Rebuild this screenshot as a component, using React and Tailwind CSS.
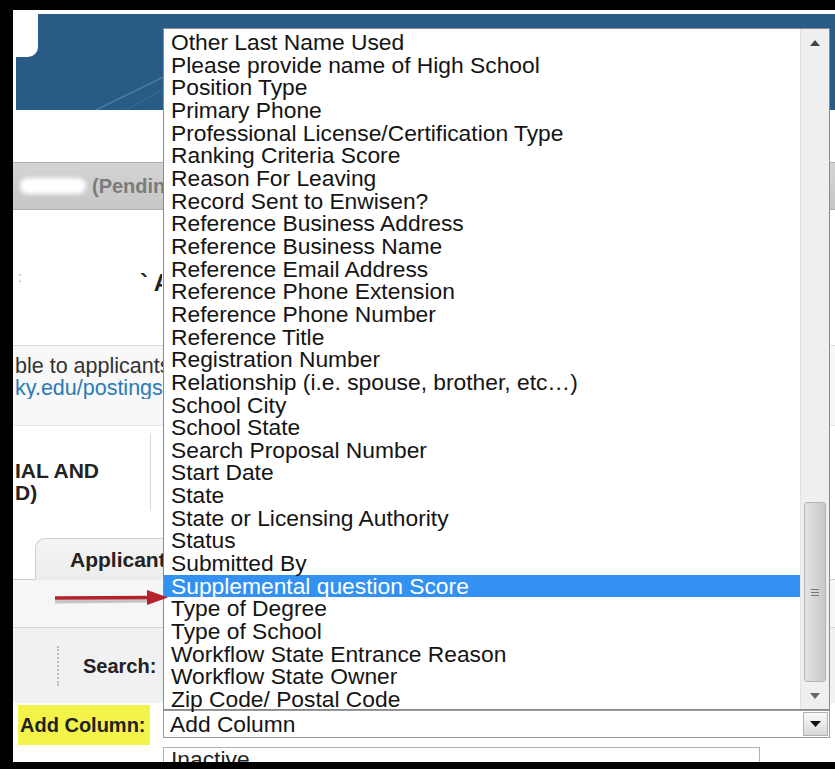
import React from 'react';

const columnOptions = [
  'Other Last Name Used',
  'Please provide name of High School',
  'Position Type',
  'Primary Phone',
  'Professional License/Certification Type',
  'Ranking Criteria Score',
  'Reason For Leaving',
  'Record Sent to Enwisen?',
  'Reference Business Address',
  'Reference Business Name',
  'Reference Email Address',
  'Reference Phone Extension',
  'Reference Phone Number',
  'Reference Title',
  'Registration Number',
  'Relationship (i.e. spouse, brother, etc…)',
  'School City',
  'School State',
  'Search Proposal Number',
  'Start Date',
  'State',
  'State or Licensing Authority',
  'Status',
  'Submitted By',
  'Supplemental question Score',
  'Type of Degree',
  'Type of School',
  'Workflow State Entrance Reason',
  'Workflow State Owner',
  'Zip Code/ Postal Code',
];

const selected = 'Supplemental question Score';

// Open option list of the "Add Column" select, with its native-looking scrollbar
const ColumnDropdown = () => (
  <div className="absolute left-[150px] top-[18px] z-10 flex h-[682px] w-[667px] border border-[#8a8a8a] bg-white">
    <ul className="flex-1 pt-[2px]">
      {columnOptions.map((opt) => (
        <li
          key={opt}
          className={`h-[22.66px] whitespace-nowrap pl-[7px] text-[22.8px] leading-[22.66px] ${
            opt === selected ? 'bg-[#3391f2] text-white' : 'text-[#141414]'
          }`}
        >
          {opt}
        </li>
      ))}
    </ul>
    <div className="flex w-[29px] flex-col border-l border-[#e2e2e2] bg-[#efefef]">
      <div className="flex h-[28px] items-center justify-center">
        <svg width="10" height="6" viewBox="0 0 10 6">
          <path d="M0 6 L5 0 L10 6 Z" fill="#444" />
        </svg>
      </div>
      <div className="flex-1" />
      <div className="mx-[3px] flex h-[180px] items-center justify-center rounded-[3px] border border-[#b4b4b4] bg-gradient-to-r from-[#e4e4e4] via-[#d6d6d6] to-[#c8c8c8]">
        <div className="flex flex-col gap-[2px]">
          <div className="h-px w-[8px] bg-[#777]" />
          <div className="h-px w-[8px] bg-[#777]" />
          <div className="h-px w-[8px] bg-[#777]" />
        </div>
      </div>
      <div className="flex h-[27px] items-center justify-center">
        <svg width="10" height="6" viewBox="0 0 10 6">
          <path d="M0 0 L10 0 L5 6 Z" fill="#666" />
        </svg>
      </div>
    </div>
  </div>
);

export default function App() {
  return (
    <div className="flex h-[769px] w-[835px] overflow-hidden bg-black pb-[7px] pl-[13px] pt-[10px] font-['Liberation_Sans',Arial,sans-serif]">
      <div className="relative flex-1 overflow-hidden bg-white">
        {/* Site header */}
        <div className="pl-[3px] pt-[4px]">
          <div className="relative h-[96px] overflow-hidden bg-[#285c87]">
            <div className="absolute left-0 top-0 h-[43px] w-[22px] rounded-br-[10px] bg-white" />
            <svg className="absolute left-0 top-0" width="819" height="96">
              <path d="M80 96 L170 52" stroke="#4a7ca5" strokeWidth="1.5" />
              <path d="M110 96 L210 40" stroke="#3a6e98" strokeWidth="1" />
            </svg>
          </div>
        </div>

        <div className="h-[52px]" />

        {/* Breadcrumb band */}
        <div className="flex h-[48px] items-center border-y border-[#b0b0b0] bg-gradient-to-b from-[#d4d4d4] to-[#c6c6c6] pl-[7px]">
          <div className="h-[16px] w-[66px] rounded-full bg-white blur-[2px]" />
          <div className="ml-[6px] w-[72px] overflow-hidden whitespace-nowrap text-[20px] font-bold text-[#7b7b7b]">(Pending</div>
        </div>

        {/* Posting title */}
        <div className="flex h-[135px] items-center">
          <span className="ml-[5px] text-[14px] text-[#d9a35b]">:</span>
          <div className="ml-[118px] mt-[10px] w-[22px] overflow-hidden whitespace-nowrap text-[24px] font-bold text-[#222]">` A</div>
        </div>

        {/* Posting notice */}
        <div className="h-[80px] border-t border-[#dcdcdc] bg-[#f8f8f8] pt-[9px] text-[21.5px] leading-[22px]">
          <p className="w-[150px] overflow-hidden whitespace-nowrap pl-[2px] text-[#333]">ble to applicants</p>
          <p className="w-[150px] overflow-hidden whitespace-nowrap pl-[2px] text-[#2b7bb5]">ky.edu/postings</p>
        </div>

        {/* Position title / summary */}
        <div className="flex h-[113px] border-t border-[#e6e6e6]">
          <div className="w-[137px] pl-[2px] pt-[34px] text-[21px] font-bold leading-[22px] text-[#222]">
            <p className="whitespace-nowrap">IAL AND</p>
            <p className="whitespace-nowrap">D)</p>
          </div>
          <div className="mt-[7px] h-[78px] w-px bg-[#d8d8d8]" />
        </div>

        {/* Tabs */}
        <div className="flex h-[42px] items-end">
          <div className="h-full w-[22px] border-b border-[#cfcfcf]" />
          <div className="flex h-full w-[300px] items-center rounded-tl-[10px] border-l border-t border-[#cfcfcf] bg-gradient-to-b from-[#f4f4f4] to-[#ececec] pl-[34px]">
            <div className="w-[94px] overflow-hidden whitespace-nowrap text-[21px] font-bold text-[#222]">Applicants</div>
          </div>
          <div className="h-full flex-1 border-b border-[#cfcfcf]" />
        </div>

        {/* Tab body with annotation arrow */}
        <div className="relative h-[47px] bg-[#f6f6f6]">
          <svg className="absolute left-[38px] top-[7px] z-20" width="122" height="24" viewBox="0 0 122 24">
            <path d="M4 14.5 L104 13.5" stroke="#8a8a8a" strokeWidth="4" opacity="0.45" />
            <path d="M4 11 L100 10.5" stroke="#b5222a" strokeWidth="3.5" />
            <path d="M96 3 L117 10.5 L96 18 Z" fill="#b5222a" />
          </svg>
        </div>

        {/* Search row */}
        <div className="flex h-[76px] items-center border-t border-[#d4d4d4] bg-[#f1f1f1]">
          <div className="ml-[44px] h-[40px] border-l-2 border-dotted border-[#bdbdbd]" />
          <span className="ml-[24px] text-[20px] font-bold text-[#222]">Search:</span>
          <div className="ml-[7px] h-[38px] w-[200px] rounded-[3px] border border-[#b5b5b5] bg-white" />
        </div>

        {/* Add column */}
        <div className="flex h-[44px] items-start">
          <div className="ml-[5px] mt-[2px] flex h-[40px] w-[132px] items-center bg-[#f4f34a] pl-[2px]">
            <span className="whitespace-nowrap text-[20px] font-bold text-[#222]">Add Column:</span>
          </div>
          <div className="ml-[13px] mt-[7px] flex h-[28px] w-[667px] items-center border border-[#9a9a9a] bg-white pl-[6px]">
            <span className="flex-1 text-[22.8px] leading-none text-[#141414]">Add Column</span>
            <div className="mr-px flex h-[24px] w-[25px] items-center justify-center border border-[#b0b0b0] bg-gradient-to-b from-[#fafafa] to-[#d8d8d8]">
              <svg width="11" height="6" viewBox="0 0 11 6">
                <path d="M0 0 L11 0 L5.5 6 Z" fill="#111" />
              </svg>
            </div>
          </div>
        </div>

        {/* Status filter */}
        <div className="ml-[150px] w-[597px] border-x border-t border-[#b0b0b0] pl-[7px] text-[22.8px] leading-[22px] text-[#222]">
          Inactive
        </div>

        <ColumnDropdown />
      </div>
    </div>
  );
}
